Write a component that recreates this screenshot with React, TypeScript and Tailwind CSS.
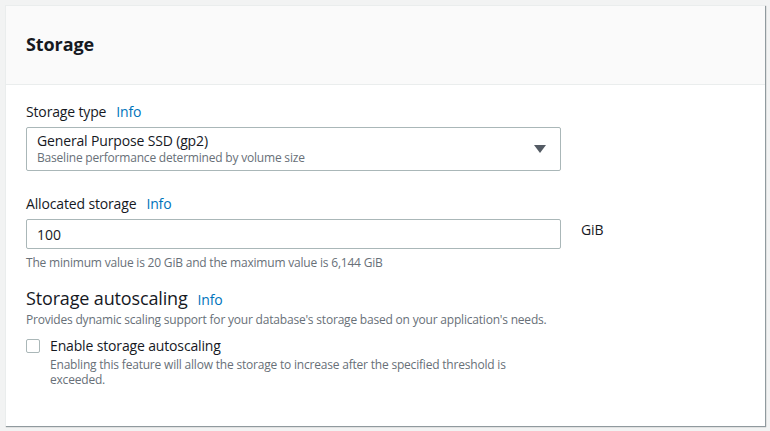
const FONT = "font-['Open_Sans',sans-serif]"

function InfoLink() {
  return <a className="ml-[10px] text-[14px] tracking-[-0.15px] text-[#0073bb]">Info</a>
}

export default function App() {
  return (
    <div className={`${FONT} min-h-[431px] w-[770px] bg-[#f2f3f3] pt-[5px] pl-[5px] text-[#16191f]`}>
      <div className="w-[760px] h-[421px] border-l border-t border-[#eaeded] bg-white shadow-[1px_1px_1px_0_rgba(0,28,36,0.3),1px_1px_1px_0_rgba(0,28,36,0.15)]">
        <div className="h-[79px] border-b border-[#eaeded] bg-[#fafafa] px-[20px] pt-[27px]">
          <h2 className="text-[18px] font-bold leading-[22px] tracking-[-0.1px]">Storage</h2>
        </div>

        <div className="px-[20px] pt-[16px]">
          <div className="flex items-center text-[14px] leading-[22px] tracking-[-0.15px]">
            <span>Storage type</span>
            <InfoLink />
          </div>
          <div className="mt-[4px] flex h-[44px] w-[535px] items-center justify-between rounded-[2px] border border-[#aab7b8] pl-[10px] pr-[14px]">
            <div className="flex flex-col">
              <span className="text-[14px] leading-[18px] tracking-[-0.15px]">General Purpose SSD (gp2)</span>
              <span className="text-[12px] leading-[16px] tracking-[-0.2px] text-[#687078]">Baseline performance determined by volume size</span>
            </div>
            <svg width="12" height="8" viewBox="0 0 12 8">
              <path d="M0 0h12L6 8z" fill="#545b64" />
            </svg>
          </div>

          <div className="mt-[22px] flex items-center text-[14px] leading-[22px] tracking-[-0.15px]">
            <span>Allocated storage</span>
            <InfoLink />
          </div>
          <div className="mt-[4px] flex items-start">
            <div className="flex h-[30px] w-[535px] items-center rounded-[2px] border border-[#aab7b8] pl-[10px] text-[14px]">
              100
            </div>
            <span className="ml-[20px] pt-[1px] text-[14px] leading-[20px] tracking-[-0.15px]">GiB</span>
          </div>
          <p className="mt-[6px] text-[12px] leading-[16px] tracking-[-0.2px] text-[#687078]">
            The minimum value is 20 GiB and the maximum value is 6,144 GiB
          </p>

          <div className="mt-[14px] flex items-baseline">
            <span className="text-[18px] leading-[26px] tracking-[-0.15px]">Storage autoscaling</span>
            <InfoLink />
          </div>
          <p className="mt-[1px] text-[12px] leading-[16px] tracking-[-0.2px] text-[#687078]">
            Provides dynamic scaling support for your database's storage based on your application's needs.
          </p>

          <div className="mt-[7px] flex items-start">
            <span className="mt-[4px] h-[14px] w-[14px] rounded-[2px] border border-[#aab7b8] bg-white" />
            <div className="ml-[10px] w-[480px]">
              <div className="text-[14px] leading-[22px] tracking-[-0.15px]">Enable storage autoscaling</div>
              <p className="text-[12px] leading-[15px] tracking-[-0.2px] text-[#687078]">
                Enabling this feature will allow the storage to increase after the specified threshold is exceeded.
              </p>
            </div>
          </div>
        </div>
      </div>
    </div>
  )
}
